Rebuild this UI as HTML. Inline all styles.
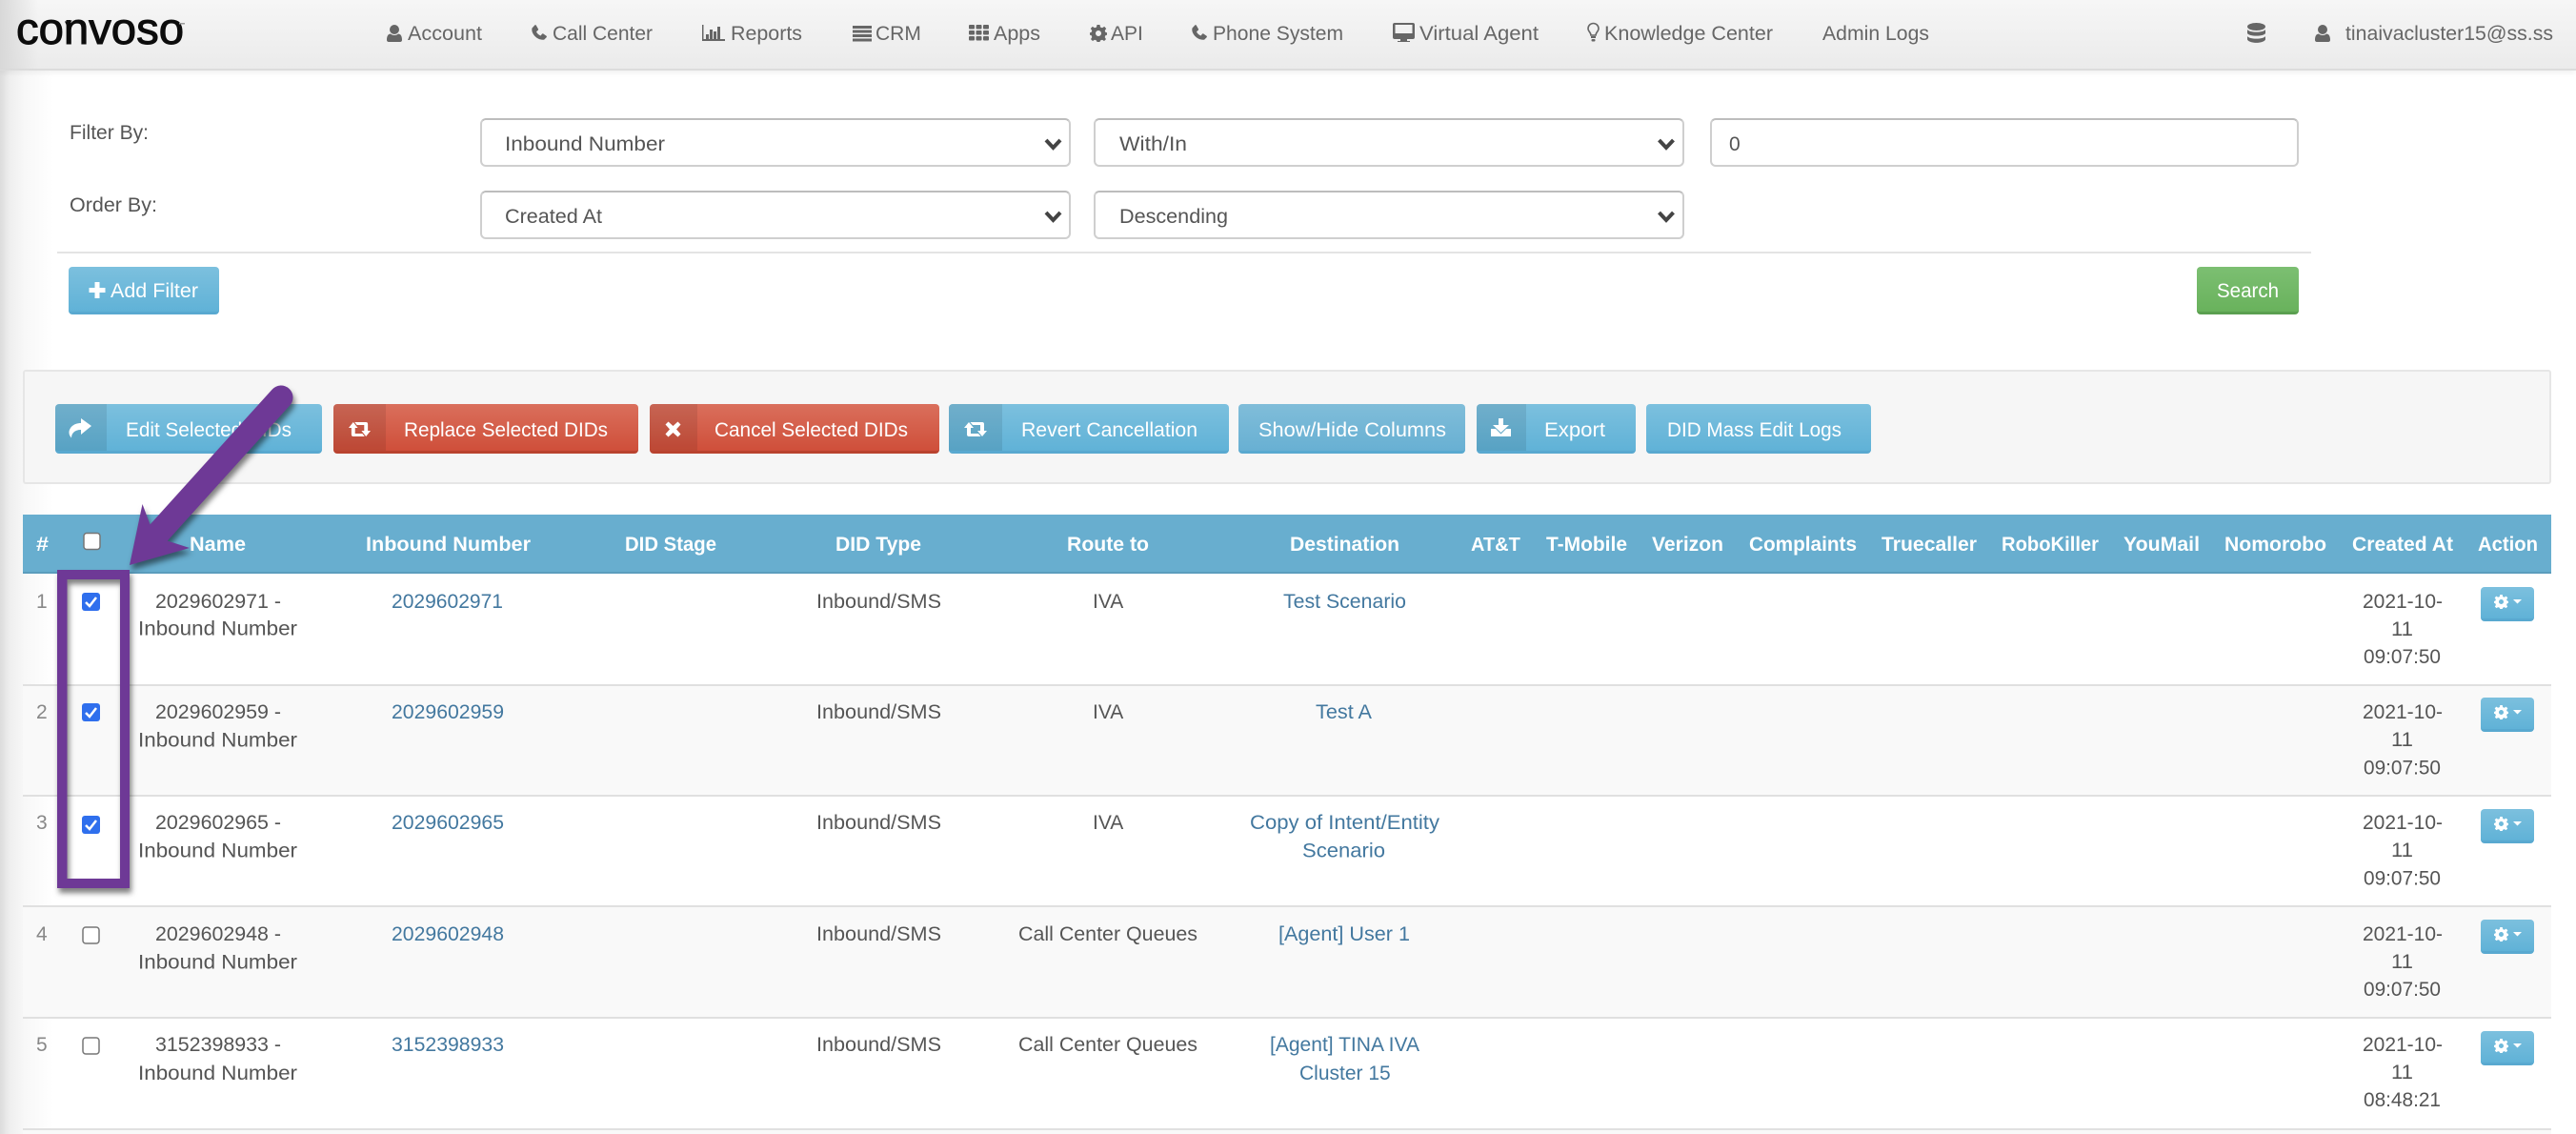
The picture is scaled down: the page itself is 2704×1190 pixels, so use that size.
<!DOCTYPE html>
<html lang="en"><head><meta charset="utf-8"><title>Convoso - DIDs</title>
<style>
html,body{margin:0;padding:0;background:#fff}
body{width:2704px;height:1190px;position:relative;overflow:hidden;font-family:"Liberation Sans",sans-serif}
.b{position:absolute;box-sizing:border-box}
.left{left:0;top:0;width:56px;height:1190px;background:linear-gradient(90deg,#dcdcdc 0,#eeeeee 10px,#f8f8f8 26px,#fff 100%)}
.nav{left:0;top:0;width:2704px;height:74px;background:linear-gradient(180deg,#f6f6f6,#ebebeb);border-bottom:2px solid #dcdcdc;box-shadow:0 3px 5px rgba(0,0,0,.05)}
.navl{left:0;top:0;width:40px;height:73px;background:linear-gradient(90deg,#d8d8d8,rgba(230,230,230,0))}
.f{background:#fff;border:2px solid #cfcfcf;border-top-color:#bdbdbd;border-radius:6px}
.info{background:linear-gradient(180deg,#7cc0de,#60b2d7);border-bottom:3px solid #59a9d0;border-radius:4px;overflow:hidden}
.info2{background:linear-gradient(180deg,#80bdd9,#68b0d3);border-bottom:3px solid #59a9d0;border-radius:4px;overflow:hidden}
.red{background:linear-gradient(180deg,#da6f5c,#cf4f3a);border-bottom:3px solid #b9432f;border-radius:4px;overflow:hidden}
.green{background:linear-gradient(180deg,#7cbf72,#69b25c);border-bottom:3px solid #5b9f50;border-radius:4px}
.ic{position:absolute;left:0;top:0;bottom:0;background:rgba(0,0,0,.085)}
.row{left:24px;width:2654px;border-bottom:2px solid #e0e0e0}
.alt{background:#f9f9f9}
svg{position:absolute;left:0;top:0}
text{font-family:"Liberation Sans",sans-serif;font-size:21px;fill:#555}
.nv text{fill:#666}
.w text{fill:#fff}
.h text{fill:#fff;font-weight:700}
.l text{fill:#43789f}
.ni text{fill:#888}
.gi{fill:#666}
.wi{fill:#fff}
</style></head><body>
<div class="b left"></div>
<div class="b nav"></div><div class="b navl"></div>

<div class="b f" style="left:504px;top:124px;width:620px;height:51px"></div>
<div class="b f" style="left:1148px;top:124px;width:620px;height:51px"></div>
<div class="b f" style="left:1795px;top:124px;width:618px;height:51px"></div>
<div class="b f" style="left:504px;top:200px;width:620px;height:51px"></div>
<div class="b f" style="left:1148px;top:200px;width:620px;height:51px"></div>
<div class="b" style="left:60px;top:264px;width:2366px;height:2px;background:#e4e4e4"></div>
<div class="b info" style="left:72px;top:280px;width:158px;height:50px"></div>
<div class="b green" style="left:2306px;top:280px;width:107px;height:50px"></div>

<div class="b" style="left:24px;top:388px;width:2654px;height:120px;background:#f6f6f6;border:2px solid #e6e6e6;border-radius:3px"></div>
<div class="b info" style="left:58px;top:424px;width:280px;height:52px"><div class="ic" style="width:54px"></div></div>
<div class="b red" style="left:350px;top:424px;width:320px;height:52px"><div class="ic" style="width:55px"></div></div>
<div class="b red" style="left:682px;top:424px;width:304px;height:52px"><div class="ic" style="width:50px"></div></div>
<div class="b info" style="left:996px;top:424px;width:294px;height:52px"><div class="ic" style="width:56px"></div></div>
<div class="b info2" style="left:1300px;top:424px;width:238px;height:52px"></div>
<div class="b info" style="left:1550px;top:424px;width:167px;height:52px"><div class="ic" style="width:52px"></div></div>
<div class="b info" style="left:1728px;top:424px;width:236px;height:52px"></div>

<div class="b" style="left:24px;top:540px;width:2654px;height:62px;background:#68aecf;border-bottom:2px solid #5b9dbd"></div>
<div class="b row" style="top:602px;height:118px"></div>
<div class="b row alt" style="top:720px;height:116px"></div>
<div class="b row" style="top:836px;height:116px"></div>
<div class="b row alt" style="top:952px;height:117px"></div>
<div class="b row" style="top:1069px;height:117px"></div>
<div class="b alt" style="left:24px;top:1186px;width:2654px;height:4px"></div>

<div class="b info" style="left:2604px;top:616px;width:56px;height:36px"></div>
<div class="b info" style="left:2604px;top:732px;width:56px;height:36px"></div>
<div class="b info" style="left:2604px;top:849px;width:56px;height:36px"></div>
<div class="b info" style="left:2604px;top:965px;width:56px;height:36px"></div>
<div class="b info" style="left:2604px;top:1082px;width:56px;height:36px"></div>

<svg width="2704" height="1190" viewBox="0 0 2704 1190" xmlns="http://www.w3.org/2000/svg">
<defs>
<symbol id="user" viewBox="0 0 16 18" overflow="visible"><circle cx="8" cy="5" r="5"/><path d="M0 16C0 11 2 9.500 4 9.500C6 11.500 10 11.500 12 9.500C14 9.500 16 11 16 16C16 17.300 15 18 14 18H2C1 18 0 17.300 0 16Z"/></symbol>
<symbol id="phone" viewBox="0 0 16 16" overflow="visible"><path d="M0.500 3.500L3.500 .3C4 0 4.500 .1 4.800 .6L7 4.500C7.200 5 7.100 5.300 6.800 5.600L5 7.300C6 9.500 7.500 10.800 9.500 11.500L11 9.600C11.400 9.300 11.800 9.200 12.200 9.400L15.600 11.800C16 12.200 16 12.700 15.700 13.100L13.200 15.600C6.500 16.800 -1 9.500 .5 3.500Z"/></symbol>
<symbol id="gear" viewBox="0 0 18 18" overflow="visible"><path fill-rule="evenodd" d="M7.500 0H10.500L11 2.500L13 3.300L15.200 1.900L17.200 4L15.700 6.100L16.500 8L18 8.300V10.700L16.500 11L15.700 13L17 15.100L15 17L13 15.700L11 16.500L10.500 18H7.500L7 16.500L5 15.700L3 17L1 15.100L2.300 13L1.500 11L0 10.700V8.300L1.500 8L2.300 6.100L.8 4L2.800 1.900L5 3.300L7 2.500ZM9 6A3 3 0 1 0 9 12A3 3 0 1 0 9 6Z"/></symbol>
<symbol id="retw" viewBox="0 0 24 15" preserveAspectRatio="none" overflow="visible"><path d="M5 0L10 6H7V12H15L17.500 15H5C3.800 15 3 14.200 3 13V6H0Z"/><path d="M19 15L14 9H17V3H9L6.500 0H19C20.200 0 21 .8 21 2V9H24Z"/></symbol>
</defs>

<!-- logo -->
<text x="17" y="46" textLength="176" lengthAdjust="spacingAndGlyphs" style="font-size:46px;fill:#0c0c0c;stroke:#0c0c0c;stroke-width:1">convoso</text>
<path d="M68 22.500L76 21.500L70 27Z" fill="#111"/>
<rect x="188" y="24" width="6" height="1.500" fill="#999"/>

<!-- nav icons -->
<g class="gi">
<use href="#user" x="406" y="26" width="16" height="18"/>
<use href="#phone" x="558" y="26" width="16" height="16"/>
<path d="M737 26h1.500v15h22.500v2h-24z"/><rect x="741" y="36" width="3" height="5"/><rect x="745" y="31" width="3" height="10"/><rect x="749" y="33" width="3" height="8"/><rect x="753" y="28" width="3" height="13"/>
<rect x="895" y="27" width="20" height="3"/><rect x="895" y="31.500" width="20" height="3"/><rect x="895" y="36" width="20" height="3"/><rect x="895" y="40.500" width="20" height="3"/>
<g><rect x="1017" y="26" width="6" height="4.500" rx="1"/><rect x="1024.500" y="26" width="6" height="4.500" rx="1"/><rect x="1032" y="26" width="6" height="4.500" rx="1"/><rect x="1017" y="32" width="6" height="4.500" rx="1"/><rect x="1024.500" y="32" width="6" height="4.500" rx="1"/><rect x="1032" y="32" width="6" height="4.500" rx="1"/><rect x="1017" y="38" width="6" height="4.500" rx="1"/><rect x="1024.500" y="38" width="6" height="4.500" rx="1"/><rect x="1032" y="38" width="6" height="4.500" rx="1"/></g>
<use href="#gear" x="1144" y="26" width="18" height="18"/>
<use href="#phone" x="1251" y="26" width="16" height="16"/>
<path fill-rule="evenodd" d="M1464 24h19a2 2 0 0 1 2 2v13a2 2 0 0 1-2 2h-6v2h3v1h-13v-1h3v-2h-6a2 2 0 0 1-2-2v-13a2 2 0 0 1 2-2zM1464.500 26v9h18v-9z"/>
<path fill="none" stroke="#666" stroke-width="1.600" d="M1670 37c0-3-3-4-3-7a5.500 5.500 0 0 1 11 0c0 3-3 4-3 7z"/><rect x="1670" y="38" width="5" height="2"/><rect x="1670.500" y="41" width="4" height="2.500" rx="1"/>
<ellipse cx="2368.500" cy="28" rx="9.500" ry="4"/><path d="M2359 31c2 3.500 17 3.500 19 0v4c-2 3.500-17 3.500-19 0z"/><path d="M2359 38c2 3.500 17 3.500 19 0v3.500c-2 4.500-17 4.500-19 0z"/>
<use href="#user" x="2430" y="26" width="16" height="18"/>
</g>
<g class="nv">
<text x="428" y="42" textLength="78" lengthAdjust="spacingAndGlyphs">Account</text>
<text x="580" y="42" textLength="105" lengthAdjust="spacingAndGlyphs">Call Center</text>
<text x="767" y="42" textLength="75" lengthAdjust="spacingAndGlyphs">Reports</text>
<text x="919" y="42">CRM</text>
<text x="1043" y="42" textLength="49" lengthAdjust="spacingAndGlyphs">Apps</text>
<text x="1166" y="42">API</text>
<text x="1273" y="42" textLength="137" lengthAdjust="spacingAndGlyphs">Phone System</text>
<text x="1490" y="42" textLength="125" lengthAdjust="spacingAndGlyphs">Virtual Agent</text>
<text x="1684" y="42" textLength="177" lengthAdjust="spacingAndGlyphs">Knowledge Center</text>
<text x="1913" y="42" textLength="112" lengthAdjust="spacingAndGlyphs">Admin Logs</text>
<text x="2462" y="42" textLength="218" lengthAdjust="spacingAndGlyphs">tinaivacluster15@ss.ss</text>
</g>

<!-- filters -->
<g>
<text x="73" y="146" textLength="83" lengthAdjust="spacingAndGlyphs">Filter By:</text>
<text x="73" y="222" textLength="92" lengthAdjust="spacingAndGlyphs">Order By:</text>
<text x="530" y="158" textLength="168" lengthAdjust="spacingAndGlyphs">Inbound Number</text>
<text x="530" y="234" textLength="102" lengthAdjust="spacingAndGlyphs">Created At</text>
<text x="1175" y="158" textLength="71" lengthAdjust="spacingAndGlyphs">With/In</text>
<text x="1175" y="234" textLength="114" lengthAdjust="spacingAndGlyphs">Descending</text>
<text x="1815" y="158">0</text>
</g>
<g fill="none" stroke="#444" stroke-width="4">
<path d="M1098 147l7.500 8l7.500-8"/><path d="M1741.500 147l7.500 8l7.500-8"/>
<path d="M1098 223l7.500 8l7.500-8"/><path d="M1741.500 223l7.500 8l7.500-8"/>
</g>
<path class="wi" d="M99.500 296h5v6h6v5h-6v6h-5v-6h-6v-5h6z"/>
<g class="w">
<text x="116" y="312" textLength="92" lengthAdjust="spacingAndGlyphs">Add Filter</text>
<text x="2327" y="312" textLength="65" lengthAdjust="spacingAndGlyphs">Search</text>
<text x="132" y="458" textLength="174" lengthAdjust="spacingAndGlyphs">Edit Selected DIDs</text>
<text x="424" y="458" textLength="214" lengthAdjust="spacingAndGlyphs">Replace Selected DIDs</text>
<text x="750" y="458" textLength="203" lengthAdjust="spacingAndGlyphs">Cancel Selected DIDs</text>
<text x="1072" y="458" textLength="185" lengthAdjust="spacingAndGlyphs">Revert Cancellation</text>
<text x="1321" y="458" textLength="197" lengthAdjust="spacingAndGlyphs">Show/Hide Columns</text>
<text x="1621" y="458" textLength="64" lengthAdjust="spacingAndGlyphs">Export</text>
<text x="1750" y="458" textLength="183" lengthAdjust="spacingAndGlyphs">DID Mass Edit Logs</text>
</g>
<!-- toolbar icons -->
<g class="wi">
<path d="M96 447L85 439V444C77 444 72.500 449 72.500 454C72.500 456 73.500 458 75 459.500C75 455 78 451 85 451V456Z"/>
<use href="#retw" x="366" y="443" width="23" height="15"/>
<path d="M699 446l-.5-.5 3-3 5 4.500 5-4.500 3 3-4.500 5 4.500 5-3 3-5-4.500-5 4.500-3-3 4.500-5z"/>
<use href="#retw" x="1012" y="443" width="24" height="15"/>
<path d="M1573 439h5v7h6l-8.500 8-8.500-8h6z"/><path d="M1565 450h5l5.500 5.500 5.500-5.500h5v8h-21z"/>
</g>

<!-- table head -->
<g class="h">
<text x="38" y="578" textLength="13" lengthAdjust="spacingAndGlyphs">#</text>
<text x="199" y="578" textLength="59" lengthAdjust="spacingAndGlyphs">Name</text>
<text x="384" y="578" textLength="173" lengthAdjust="spacingAndGlyphs">Inbound Number</text>
<text x="656" y="578" textLength="96" lengthAdjust="spacingAndGlyphs">DID Stage</text>
<text x="877" y="578" textLength="90" lengthAdjust="spacingAndGlyphs">DID Type</text>
<text x="1120" y="578" textLength="86" lengthAdjust="spacingAndGlyphs">Route to</text>
<text x="1354" y="578" textLength="115" lengthAdjust="spacingAndGlyphs">Destination</text>
<text x="1544" y="578" style="font-size:20px">AT&amp;T</text>
<text x="1623" y="578" textLength="85" lengthAdjust="spacingAndGlyphs">T-Mobile</text>
<text x="1734" y="578" textLength="75" lengthAdjust="spacingAndGlyphs">Verizon</text>
<text x="1836" y="578" textLength="113" lengthAdjust="spacingAndGlyphs">Complaints</text>
<text x="1975" y="578" textLength="100" lengthAdjust="spacingAndGlyphs">Truecaller</text>
<text x="2101" y="578" textLength="102" lengthAdjust="spacingAndGlyphs">RoboKiller</text>
<text x="2229" y="578" textLength="80" lengthAdjust="spacingAndGlyphs">YouMail</text>
<text x="2335" y="578" textLength="107" lengthAdjust="spacingAndGlyphs">Nomorobo</text>
<text x="2469" y="578" textLength="106" lengthAdjust="spacingAndGlyphs">Created At</text>
<text x="2601" y="578" textLength="63" lengthAdjust="spacingAndGlyphs">Action</text>
</g>
<rect x="88" y="559.500" width="17" height="17" rx="3" fill="#fff" stroke="#767676" stroke-width="1.500"/>

<!-- row numbers -->
<g class="ni">
<text x="38" y="638">1</text><text x="38" y="754">2</text><text x="38" y="870">3</text><text x="38" y="987">4</text><text x="38" y="1103">5</text>
</g>

<!-- checkboxes -->
<g>
<rect x="86" y="622" width="19" height="19" rx="3" fill="#2f6fed"/><path d="M90 632l4 4 7-9" fill="none" stroke="#fff" stroke-width="2.500"/>
<rect x="86" y="738" width="19" height="19" rx="3" fill="#2f6fed"/><path d="M90 748l4 4 7-9" fill="none" stroke="#fff" stroke-width="2.500"/>
<rect x="86" y="856" width="19" height="19" rx="3" fill="#2f6fed"/><path d="M90 866l4 4 7-9" fill="none" stroke="#fff" stroke-width="2.500"/>
<rect x="87" y="973" width="17" height="17" rx="3" fill="#fff" stroke="#767676" stroke-width="1.500"/>
<rect x="87" y="1089" width="17" height="17" rx="3" fill="#fff" stroke="#767676" stroke-width="1.500"/>
</g>

<!-- names -->
<g>
<text x="163" y="638" textLength="132" lengthAdjust="spacingAndGlyphs">2029602971 -</text><text x="145" y="666.500" textLength="167" lengthAdjust="spacingAndGlyphs">Inbound Number</text>
<text x="163" y="754" textLength="132" lengthAdjust="spacingAndGlyphs">2029602959 -</text><text x="145" y="783.500" textLength="167" lengthAdjust="spacingAndGlyphs">Inbound Number</text>
<text x="163" y="870" textLength="132" lengthAdjust="spacingAndGlyphs">2029602965 -</text><text x="145" y="899.500" textLength="167" lengthAdjust="spacingAndGlyphs">Inbound Number</text>
<text x="163" y="987" textLength="132" lengthAdjust="spacingAndGlyphs">2029602948 -</text><text x="145" y="1016.500" textLength="167" lengthAdjust="spacingAndGlyphs">Inbound Number</text>
<text x="163" y="1103" textLength="132" lengthAdjust="spacingAndGlyphs">3152398933 -</text><text x="145" y="1133" textLength="167" lengthAdjust="spacingAndGlyphs">Inbound Number</text>
</g>
<g class="l">
<text x="411" y="638" textLength="117" lengthAdjust="spacingAndGlyphs">2029602971</text>
<text x="411" y="754" textLength="118" lengthAdjust="spacingAndGlyphs">2029602959</text>
<text x="411" y="870" textLength="118" lengthAdjust="spacingAndGlyphs">2029602965</text>
<text x="411" y="987" textLength="118" lengthAdjust="spacingAndGlyphs">2029602948</text>
<text x="411" y="1103" textLength="118" lengthAdjust="spacingAndGlyphs">3152398933</text>
<text x="1347" y="638" textLength="129" lengthAdjust="spacingAndGlyphs">Test Scenario</text>
<text x="1381" y="754" textLength="59" lengthAdjust="spacingAndGlyphs">Test A</text>
<text x="1312" y="870" textLength="199" lengthAdjust="spacingAndGlyphs">Copy of Intent/Entity</text>
<text x="1367" y="899.500" textLength="87" lengthAdjust="spacingAndGlyphs">Scenario</text>
<text x="1342" y="987" textLength="138" lengthAdjust="spacingAndGlyphs">[Agent] User 1</text>
<text x="1333" y="1103" textLength="157" lengthAdjust="spacingAndGlyphs">[Agent] TINA IVA</text>
<text x="1364" y="1133">Cluster 15</text>
</g>
<g>
<text x="857" y="638" textLength="131" lengthAdjust="spacingAndGlyphs">Inbound/SMS</text>
<text x="857" y="754" textLength="131" lengthAdjust="spacingAndGlyphs">Inbound/SMS</text>
<text x="857" y="870" textLength="131" lengthAdjust="spacingAndGlyphs">Inbound/SMS</text>
<text x="857" y="987" textLength="131" lengthAdjust="spacingAndGlyphs">Inbound/SMS</text>
<text x="857" y="1103" textLength="131" lengthAdjust="spacingAndGlyphs">Inbound/SMS</text>
<text x="1147" y="638">IVA</text>
<text x="1147" y="754">IVA</text>
<text x="1147" y="870">IVA</text>
<text x="1069" y="987" textLength="188" lengthAdjust="spacingAndGlyphs">Call Center Queues</text>
<text x="1069" y="1103" textLength="188" lengthAdjust="spacingAndGlyphs">Call Center Queues</text>

<text x="2480" y="638" textLength="84" lengthAdjust="spacingAndGlyphs">2021-10-</text><text x="2510" y="667" textLength="23" lengthAdjust="spacingAndGlyphs">11</text><text x="2481" y="696" textLength="81" lengthAdjust="spacingAndGlyphs">09:07:50</text>
<text x="2480" y="754" textLength="84" lengthAdjust="spacingAndGlyphs">2021-10-</text><text x="2510" y="783" textLength="23" lengthAdjust="spacingAndGlyphs">11</text><text x="2481" y="812.500" textLength="81" lengthAdjust="spacingAndGlyphs">09:07:50</text>
<text x="2480" y="870" textLength="84" lengthAdjust="spacingAndGlyphs">2021-10-</text><text x="2510" y="899" textLength="23" lengthAdjust="spacingAndGlyphs">11</text><text x="2481" y="928.500" textLength="81" lengthAdjust="spacingAndGlyphs">09:07:50</text>
<text x="2480" y="987" textLength="84" lengthAdjust="spacingAndGlyphs">2021-10-</text><text x="2510" y="1016" textLength="23" lengthAdjust="spacingAndGlyphs">11</text><text x="2481" y="1045" textLength="81" lengthAdjust="spacingAndGlyphs">09:07:50</text>
<text x="2480" y="1103" textLength="84" lengthAdjust="spacingAndGlyphs">2021-10-</text><text x="2510" y="1132" textLength="23" lengthAdjust="spacingAndGlyphs">11</text><text x="2481" y="1161" textLength="81" lengthAdjust="spacingAndGlyphs">08:48:21</text>
</g>

<!-- action buttons -->
<g class="wi">
<use href="#gear" x="2618" y="624" width="15" height="15"/><path d="M2638 629h9l-4.500 4.500z"/>
<use href="#gear" x="2618" y="740" width="15" height="15"/><path d="M2638 745h9l-4.500 4.500z"/>
<use href="#gear" x="2618" y="857" width="15" height="15"/><path d="M2638 862h9l-4.500 4.500z"/>
<use href="#gear" x="2618" y="973" width="15" height="15"/><path d="M2638 978h9l-4.500 4.500z"/>
<use href="#gear" x="2618" y="1090" width="15" height="15"/><path d="M2638 1095h9l-4.500 4.500z"/>
</g>

<!-- annotation -->
<g style="filter:drop-shadow(2px 5px 3px rgba(0,0,0,.5))">
<path fill="#6e3996" fill-rule="evenodd" d="M60 598H136V932H60ZM70.500 608V922H126V608Z"/>
<path fill="none" stroke="#6e3996" stroke-width="25" stroke-linecap="round" d="M295 417L163 563"/>
<path fill="#6e3996" d="M136 593L149.500 529L158.500 553L174 567L199 575Z"/>
</g>
</svg>
</body></html>
